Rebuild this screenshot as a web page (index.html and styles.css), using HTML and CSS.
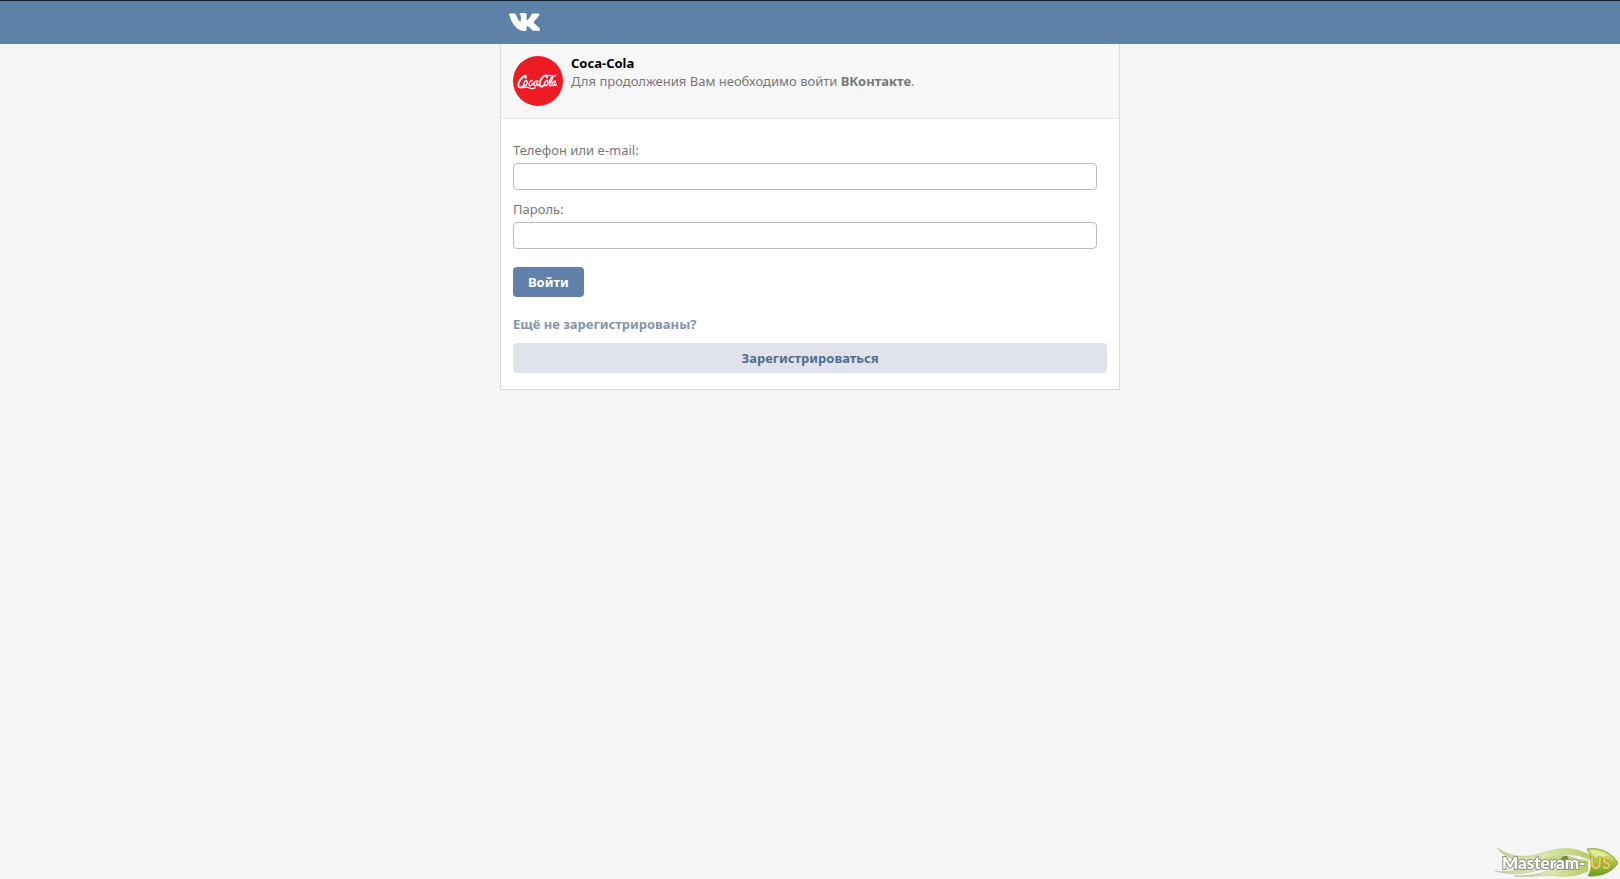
FILE: index.html
```html
<!DOCTYPE html>
<html lang="ru">
<head>
<meta charset="utf-8">
<meta name="viewport" content="width=device-width, initial-scale=1">
<title>ВКонтакте | Вход</title>
<link rel="stylesheet" href="styles.css">
</head>
<body>
<header class="topbar">
  <div class="topbar-inner">
    <a class="logo" href="#" aria-label="ВКонтакте">
      <svg viewBox="0 0 30 18" width="31" height="18" preserveAspectRatio="none" aria-hidden="true">
        <path fill="#fff" d="M.9.500H5.300Q6.200.500 6.600 1.500Q8.500 6.500 10.400 8.500Q11.500 9 11.500 7V3.500Q11.400 1.500 10 1Q10.500 0 12 0H16Q17 0 17 1.500V6.500Q17 7.700 18 7Q20.500 4.500 22 1.300Q22.400.500 23.300.500H28.200Q30 .500 29.200 2.300Q27.700 5 24.200 8.600Q23.500 9.500 24.300 10.300L29.300 15Q31.300 17.500 28.500 17.800H24.300Q22.800 17.800 21.800 16.500L18.800 13.400Q17 12 17 14.500V16.500Q17 18 15.500 18C8 18.500 3 11 .2 2Q-.2.500.9.500Z"/>
      </svg>
    </a>
  </div>
</header>
<main class="card">
  <section class="app">
    <svg class="avatar" viewBox="0 0 50 50" role="img" aria-label="Coca-Cola">
      <circle cx="25" cy="25" r="25" fill="#ed1c24"/>
      <g fill="none" stroke="#fff" stroke-linecap="round" stroke-linejoin="round">
        <path stroke-width="1.800" d="M12.500 22c1.200-2.200-.3-3.200-2.700-1-3.400 3-5.400 7.500-4 9.700 1.200 1.700 3.900.2 5.400-2"/>
        <path stroke-width="1.300" d="M13.300 24.500c-2.200.2-3.500 5-1.700 5.300 2.200.2 3.700-5.100 1.700-5.300M19 25c.3-1.200-1.500-.6-2.300 1.200-1 2.200-.8 3.800.5 3.600 1.500-.2 2.600-2 3.400-3.200M24.200 25c-2.400-.7-4.500 4.300-2.700 4.700 1.200.2 2.800-2.500 3.400-4.600-.9 2.200-1.500 4.600-.2 4.500 1 0 1.700-1 2.200-1.800"/>
        <path stroke-width="1.800" d="M34 21.500c.8-2.700-2-2.700-4.100-.5-2.900 2.900-4.300 7.500-2.700 9.200 1.300 1.300 3.300-.2 4.500-1.700"/>
        <path stroke-width="1.300" d="M34 24.500c-2.200.2-3.500 5-1.700 5.300 2.200.2 3.800-5 1.700-5.300M36.500 28c2-2.500 3.600-7 2.700-7.300-1.200-.1-3.400 6.900-3 8.500.3 1.500 1.700.5 2.700-1M42 25.300c-2.100-.8-4.200 4-2.600 4.400 1.200.2 2.600-2.600 3.100-4.500-.7 2.300-1.200 4.500.1 4.300l.9-.4"/>
        <path stroke-width="1.200" d="M9 31.900c3-1.400 5.300-.9 8 .2 2.400 1 4.300.5 5.500-.8M33 20.300c2-1.200 3.500-1 5-.5 2 .8 4 .6 5-.8"/>
      </g>
    </svg>
    <div class="app-info">
      <h1 class="app-name">Coca-Cola</h1>
      <p class="app-note">Для продолжения Вам необходимо войти <b>ВКонтакте</b>.</p>
    </div>
  </section>
  <form class="login" action="#">
    <label class="label" for="email">Телефон или e-mail:</label>
    <input class="field" id="email" type="text" name="email">
    <label class="label" for="pass">Пароль:</label>
    <input class="field" id="pass" type="password" name="pass">
    <button class="button" type="submit">Войти</button>
    <h2 class="question">Ещё не зарегистрированы?</h2>
    <a class="button button-wide" href="#">Зарегистрироваться</a>
  </form>
</main>
<svg class="watermark" viewBox="0 0 128 36" role="img" aria-label="Masteram-US">
  <defs>
    <linearGradient id="leaf" x1="0" y1="0" x2="0" y2="1">
      <stop offset="0" stop-color="#d9e67a"/>
      <stop offset="0.450" stop-color="#a9cc3e"/>
      <stop offset="1" stop-color="#6b9a22"/>
    </linearGradient>
    <linearGradient id="stem" x1="0" y1="0" x2="1" y2="0">
      <stop offset="0" stop-color="#c3cc9a"/>
      <stop offset="0.500" stop-color="#dde6b0"/>
      <stop offset="1" stop-color="#b5cf5c"/>
    </linearGradient>
  </defs>
  <g fill="url(#stem)" stroke="#b3bf84" stroke-width="0.500">
    <path d="M5 5c12 8 25 10 38 7 15-4 24-8 37-6 8 1 13 4 18 6v5c-12-6-26-7-38-3-10 4-19 5-28 4C21 17 11 13 5 5z"/>
    <path d="M3 28c17 2 32-2 42-8 12-7 26-10 40-4-15-1-21 3-31 8-15 7-34 9-51 4z"/>
    <path d="M22 33c20 0 36-4 46-11 9-5 18-7 28-4v10c-10 5-20 6-31 5-15-2-27 2-43 0z"/>
  </g>
  <path fill="#71894c" d="M66 20c3-6 6-8 9-7 3 2 0 7-4 11z"/>
  <path d="M95 6c14-2 25 4 31 14-5 8-15 14-30 13 5-9 5-18-1-27z" fill="url(#leaf)" stroke="#86a545"/>
  <path d="M99 8c9-1 17 3 22 9-8-3-13-4-19-3z" fill="#eef4b5" opacity="0.700"/>
  <text class="mark mark-name" x="10" y="26">Masteram-</text>
  <text class="mark mark-zone" x="98" y="26">US</text>
</svg>
</body>
</html>
```
FILE: styles.css
```css
* {
  box-sizing: border-box;
}

body {
  margin: 0;
  background: #f5f5f5;
  color: #777;
  font-family: "Noto Sans", Tahoma, sans-serif;
  font-size: 13px;
  line-height: 18px;
}

.topbar {
  border-top: 1px solid #14202c;
  background: #5e81a8;
}

.topbar-inner {
  max-width: 620px;
  margin: 0 auto;
  padding: 12px 9px 13px;
}

.logo,
.logo svg {
  display: block;
  width: 31px;
}

.card {
  max-width: 620px;
  margin: 0 auto;
  border: 1px solid #dadbdc;
  border-top: 0;
  background: #fff;
}

.app {
  display: flex;
  gap: 8px;
  padding: 10px 12px 12px;
  border-bottom: 1px solid #e4e5e6;
  background: #f7f7f7;
}

.avatar {
  flex: none;
  width: 50px;
  height: 50px;
  margin-top: 2px;
}

.app-name,
.app-note,
.question {
  margin: 0;
  font-size: inherit;
}

.app-name {
  color: #000;
}

.login {
  display: flex;
  flex-direction: column;
  align-items: flex-start;
  padding: 22px 12px 16px;
}

.label {
  margin-bottom: 4px;
}

.field {
  width: calc(100% - 10px);
  height: 27px;
  margin: 0 0 10px;
  padding: 4px 6px;
  border: 1px solid #b8bec8;
  border-radius: 4px;
  background: #fff;
  font: inherit;
}

.button {
  margin-top: 8px;
  padding: 6px 15px;
  border: 0;
  border-radius: 4px;
  background: #6181aa;
  color: #fff;
  font: inherit;
  font-weight: bold;
  text-align: center;
  text-decoration: none;
}

.question {
  margin-top: 18px;
  color: #8496aa;
}

.button-wide {
  align-self: stretch;
  margin-top: 10px;
  background: #e0e3ea;
  color: #506d94;
}

.watermark {
  position: fixed;
  right: 0;
  bottom: 0;
  width: 128px;
  height: 36px;
}

.mark {
  font-family: Lato, sans-serif;
  font-size: 17px;
  font-weight: 900;
  paint-order: stroke;
  stroke: #8f957c;
  stroke-width: 2px;
  fill: #fff;
}

.mark-zone {
  font-size: 16px;
  fill: #f0c65a;
  stroke: #8a9a3c;
  stroke-width: 1px;
}
```
